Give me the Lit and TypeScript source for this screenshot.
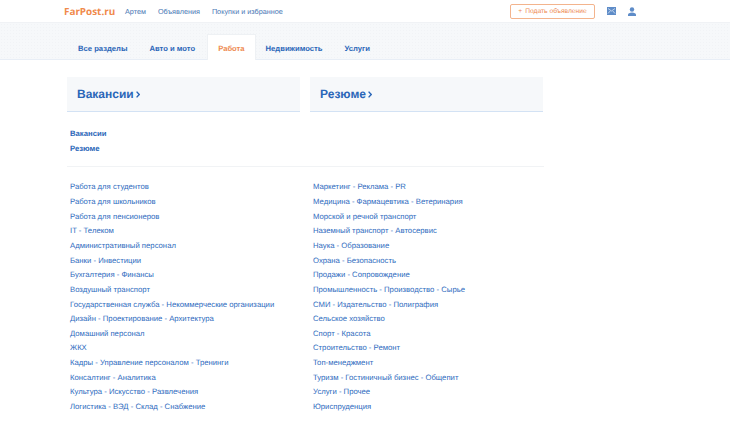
import { LitElement, html, css } from "lit";
import { customElement } from "lit/decorators.js";

const left = ["Работа для студентов","Работа для школьников","Работа для пенсионеров","IT - Телеком","Административный персонал","Банки - Инвестиции","Бухгалтерия - Финансы","Воздушный транспорт","Государственная служба - Некоммерческие организации","Дизайн - Проектирование - Архитектура","Домашний персонал","ЖКХ","Кадры - Управление персоналом - Тренинги","Консалтинг - Аналитика","Культура - Искусство - Развлечения","Логистика - ВЭД - Склад - Снабжение"];
const right = ["Маркетинг - Реклама - PR","Медицина - Фармацевтика - Ветеринария","Морской и речной транспорт","Наземный транспорт - Автосервис","Наука - Образование","Охрана - Безопасность","Продажи - Сопровождение","Промышленность - Производство - Сырье","СМИ - Издательство - Полиграфия","Сельское хозяйство","Спорт - Красота","Строительство - Ремонт","Топ-менеджмент","Туризм - Гостиничный бизнес - Общепит","Услуги - Прочее","Юриспруденция"];

@customElement("app-root")
export class AppRoot extends LitElement {
  static styles = css`
    :host { display: block; width: 730px; height: 432px; overflow: hidden; background: #fff; font-family: "Liberation Sans", Arial, sans-serif; font-size: 7.72px; color: #2f6cc0; text-rendering: geometricPrecision; }
    a { color: inherit; text-decoration: none; }
    .top { height: 22px; display: flex; align-items: center; padding: 0 94px 0 64px; background: #fff; }
    .logo { font: bold 9.9px "Open Sans", sans-serif; color: #f08a4b; width: 61px; white-space: nowrap; }
    .nav { display: flex; gap: 12px; color: #4a78b5; font-size: 7.25px; }
    .spacer { flex: 1; }
    .add { width: 85px; height: 15px; box-sizing: border-box; border: 1px solid #f3b48d; border-radius: 2px; color: #ee8a50; font-size: 6.7px; display: flex; align-items: center; justify-content: center; gap: 3px; white-space: nowrap; }
    .icons { display: flex; align-items: center; gap: 12px; margin-left: 12px; }
    .band { height: 38px; box-sizing: border-box; background: #f6f8fa; background-image: radial-gradient(#f1f3f6 .6px, transparent .7px); background-size: 3px 3px; border-top: 1px solid #f0f2f5; border-bottom: 1px solid #e8eef6; display: flex; padding-left: 67px; align-items: flex-end; }
    .tab { height: 26px; box-sizing: border-box; padding: 2px 11px 0; font-weight: bold; font-size: 7.65px; color: #2a66b8; display: flex; align-items: center; white-space: nowrap; margin-bottom: -1px; }
    .tab.on { background: #fff; color: #ee8a50; border: 1px solid #eef1f4; border-bottom: 0; padding: 2px 10px 0; margin-left: 1px; margin-right: -1px; }
    .main { width: 477px; margin-left: 67px; }
    .heads { display: grid; grid-template-columns: 233px 233px; gap: 10px; margin-top: 17px; }
    .head { height: 34px; background: #f6f8fa; border-bottom: 1px solid #d3e2f4; display: flex; align-items: center; padding-left: 10px; font-weight: bold; font-size: 12px; color: #2a66b8; gap: 2px; }
    .sub { padding: 14px 0 10px 3px; border-bottom: 1px solid #f1f3f5; font-weight: bold; font-size: 7.72px; color: #2a66b8; display: grid; grid-auto-rows: 15px; align-items: center; height: 30px; }
    .cols { display: grid; grid-template-columns: 243px 230px; padding: 13.4px 0 0 3px; }
    .cols div { height: 14.65px; line-height: 14.65px; white-space: nowrap; }
  `;
  render() {
    const chev = html`<svg width="4" height="7" viewBox="0 0 4 7"><path d="M.6 .6 3.2 3.5 .6 6.4" fill="none" stroke="#2a66b8" stroke-width="1.4"/></svg>`;
    return html`
      <div class="top">
        <span class="logo">FarPost.ru</span>
        <div class="nav"><a>Артем</a><a>Объявления</a><a>Покупки и избранное</a></div>
        <span class="spacer"></span>
        <a class="add"><span>+</span> Подать объявление</a>
        <div class="icons">
          <svg width="9" height="8" viewBox="0 0 9 8"><rect width="9" height="8" fill="#5e8cc8"/><path d="M1 1.5 4.5 4 8 1.5M1 6.5 3.2 4M8 6.5 5.8 4" fill="none" stroke="#dbe6f4" stroke-width=".8"/></svg>
          <svg width="8" height="9" viewBox="0 0 8 9"><circle cx="4" cy="2.5" r="2.2" fill="#5e8cc8"/><path d="M0 9V7.6C0 6.5 1.8 5.5 4 5.5S8 6.5 8 7.6V9z" fill="#5e8cc8"/></svg>
        </div>
      </div>
      <div class="band">
        <a class="tab">Все разделы</a><a class="tab">Авто и мото</a><a class="tab on">Работа</a><a class="tab">Недвижимость</a><a class="tab">Услуги</a>
      </div>
      <div class="main">
        <div class="heads">
          <div class="head">Вакансии ${chev}</div>
          <div class="head">Резюме ${chev}</div>
        </div>
        <div class="sub"><a>Вакансии</a><a>Резюме</a></div>
        <div class="cols">
          ${left.map((l, i) => html`<div>${l}</div><div>${right[i]}</div>`)}
        </div>
      </div>
    `;
  }
}
